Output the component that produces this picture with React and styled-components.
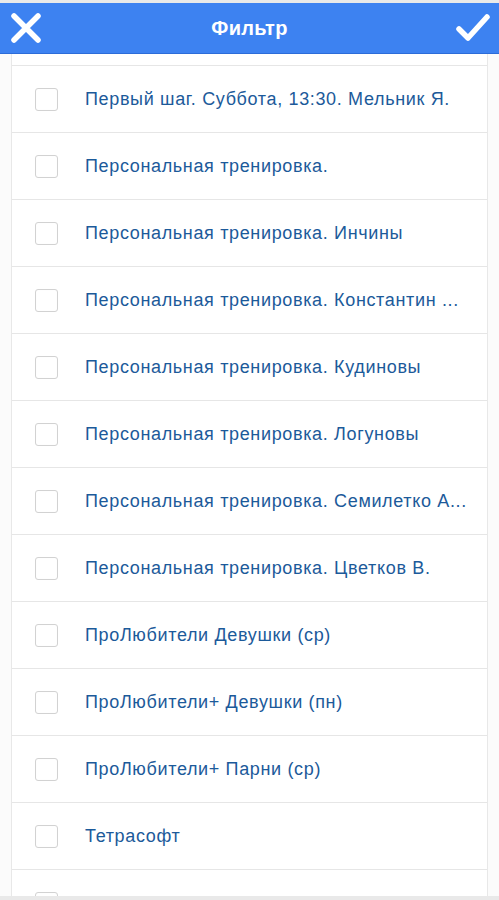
import React from "react";
import styled, { createGlobalStyle } from "styled-components";

const Global = createGlobalStyle`
  html, body { margin: 0; padding: 0; background: #ffffff; }
  body { font-family: "Liberation Sans", Arial, sans-serif; overflow: hidden; }
  * { box-sizing: border-box; }
`;

const Screen = styled.div`
  height: 900px;
  display: flex;
  flex-direction: column;
  background: #fbfbfb;
`;

const Strip = styled.div`
  flex: 0 0 ${(p) => p.h}px;
  background: #e9e9e9;
`;

const Header = styled.header`
  flex: 0 0 51px;
  background: #3d82f1;
  border-bottom: 1px solid #2c6cd8;
  display: grid;
  grid-template-columns: 52px 1fr 52px;
  align-items: center;
`;

const IconButton = styled.button`
  border: 0;
  background: transparent;
  padding: 0;
  height: 100%;
  display: flex;
  align-items: center;
  justify-content: ${(p) => (p.right ? "flex-end" : "flex-start")};
  padding-left: ${(p) => (p.right ? 0 : 9)}px;
  padding-right: ${(p) => (p.right ? 8 : 0)}px;
`;

const Title = styled.h1`
  margin: 0;
  text-align: center;
  color: #ffffff;
  font-size: 20px;
  font-weight: 700;
  font-family: "Liberation Sans", Arial, sans-serif;
  letter-spacing: 0.3px;
`;

const List = styled.ul`
  list-style: none;
  margin: 0 11px 0 11px;
  padding: 0;
  flex: 1;
  overflow: hidden;
  background: #ffffff;
  border-left: 1px solid #e8e8e8;
  border-right: 1px solid #e8e8e8;
`;

const Stub = styled.li`
  height: 12px;
  border-bottom: 1px solid #e6e6e6;
`;

const Row = styled.li`
  height: 67px;
  border-bottom: 1px solid #e6e6e6;
  display: flex;
  align-items: center;
  padding-left: 23px;
  padding-right: 18px;
  gap: 27px;
`;

const Box = styled.span`
  flex: 0 0 23px;
  width: 23px;
  height: 23px;
  border: 1px solid #d2d2d2;
  border-radius: 3px;
  background: #fff;
  box-shadow: inset 0 0 1px rgba(0, 0, 0, 0.05);
`;

const Label = styled.span`
  color: #1c5a9a;
  font-size: 18px;
  letter-spacing: 0.65px;
  white-space: nowrap;
  min-width: 0;
`;

const items = [
  "Первый шаг. Суббота, 13:30. Мельник Я.",
  "Персональная тренировка.",
  "Персональная тренировка. Инчины",
  "Персональная тренировка. Константин ...",
  "Персональная тренировка. Кудиновы",
  "Персональная тренировка. Логуновы",
  "Персональная тренировка. Семилетко А...",
  "Персональная тренировка. Цветков В.",
  "ПроЛюбители Девушки (ср)",
  "ПроЛюбители+ Девушки (пн)",
  "ПроЛюбители+ Парни (ср)",
  "Тетрасофт",
  "",
];

export default function App() {
  return (
    <>
      <Global />
      <Screen>
        <Strip h={3} />
        <Header>
          <IconButton aria-label="close">
            <svg width="34" height="34" viewBox="0 0 34 34">
              <path d="M5 5 L29 29 M29 5 L5 29" stroke="#fff" strokeWidth="5.5" strokeLinecap="round" fill="none" />
            </svg>
          </IconButton>
          <Title>Фильтр</Title>
          <IconButton right aria-label="apply">
            <svg width="36" height="34" viewBox="0 0 36 34">
              <path d="M4 18 L13 27 L32 6" stroke="#fff" strokeWidth="5.5" strokeLinecap="round" strokeLinejoin="round" fill="none" />
            </svg>
          </IconButton>
        </Header>
        <List>
          <Stub />
          {items.map((t, i) => (
            <Row key={i}>
              <Box />
              {t && <Label>{t}</Label>}
            </Row>
          ))}
        </List>
        <Strip h={4} />
      </Screen>
    </>
  );
}
